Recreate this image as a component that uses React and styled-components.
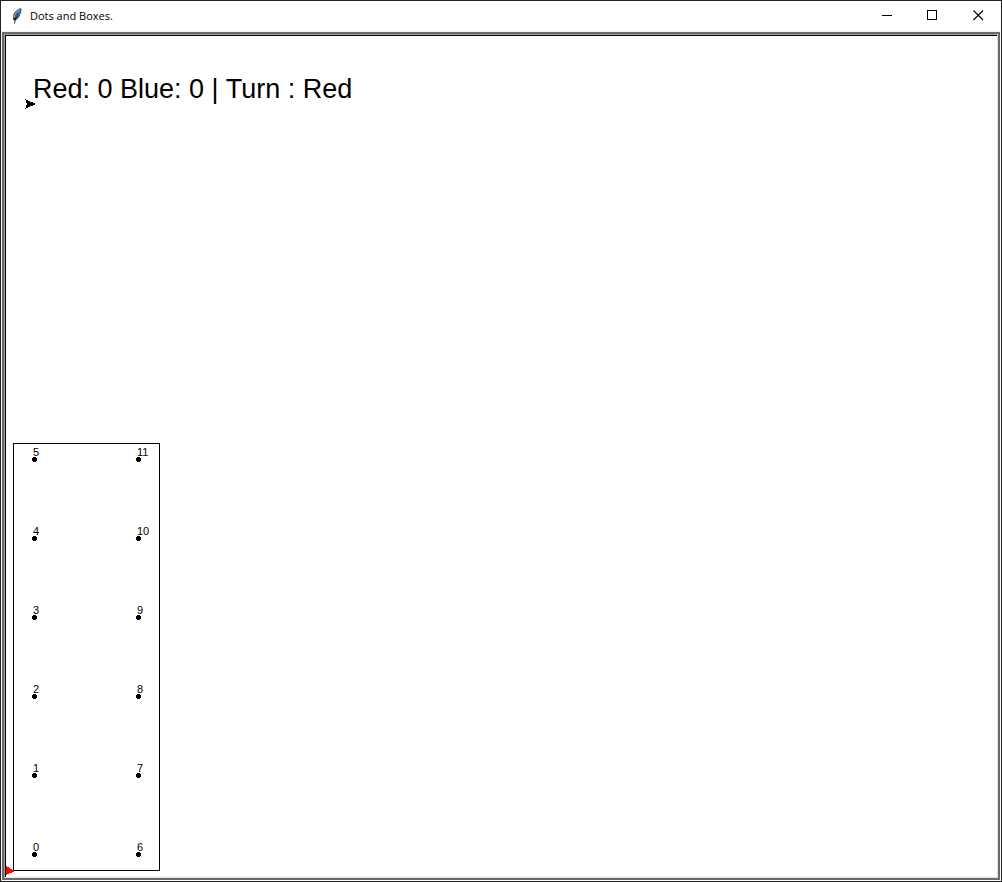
import React from "react";
import styled, { createGlobalStyle } from "styled-components";

const GlobalStyle = createGlobalStyle`
  *, *::before, *::after { box-sizing: border-box; }
  body { margin: 0; background: #fff; }
`;

const Window = styled.div`
  display: flex;
  flex-direction: column;
  min-height: 100vh;
  border: 1px solid #222024;
  background: #fff;
  color: #000;
`;

const TitleBar = styled.header`
  display: flex;
  align-items: center;
  height: 30px;
  padding-left: 10px;
`;

const Title = styled.h1`
  flex: 1;
  margin: 0 0 0 7px;
  font: 400 11px/16px "Open Sans", "Noto Sans", sans-serif;
`;

const CaptionButton = styled.button`
  display: flex;
  align-items: center;
  justify-content: center;
  width: 46px;
  height: 30px;
  padding: 0 0 2px;
  border: 0;
  background: transparent;
  color: #000;
`;

const Frame = styled.div`
  display: flex;
  flex: 1;
  border: 1px solid #fff;
  border-top-color: #f0f0f0;
  border-left-color: #f0f0f0;
`;

const Bezel = styled.div`
  display: flex;
  flex: 1;
  border: 2px solid #696969;
`;

const Groove = styled.div`
  display: flex;
  flex: 1;
  border: 1px solid #e3e3e3;
  border-top-color: #a0a0a0;
  border-left-color: #a0a0a0;
`;

const Canvas = styled.main`
  position: relative;
  display: flex;
  flex: 1;
  flex-direction: column;
  align-items: flex-start;
  justify-content: space-between;
  padding: 37px 7px 6px;
  border: solid #000;
  border-width: 1px 0 0 1px;
  font-family: "Liberation Sans", Arial, sans-serif;
`;

const Score = styled.p`
  margin: 0 0 0 20px;
  font-size: 27px;
  line-height: 32px;
`;

const Board = styled.ol`
  display: grid;
  grid-template-columns: 104px 23px;
  grid-template-rows: repeat(6, 15px);
  grid-auto-flow: column;
  row-gap: 64px;
  margin: 0;
  padding: 3px 0 13px 18px;
  border: 1px solid #000;
  list-style: none;
`;

const Point = styled.li`
  display: flex;
  flex-direction: column;
`;

const PointLabel = styled.span`
  padding-left: 1px;
  font-size: 11px;
  line-height: 10px;
`;

const Cursor = styled.svg`
  position: absolute;
  left: ${(p) => p.$left};
  top: ${(p) => p.$top};
  bottom: ${(p) => p.$bottom};
`;

const points = [5, 4, 3, 2, 1, 0, 11, 10, 9, 8, 7, 6];

const Feather = () => (
  <svg width="12" height="16" viewBox="0 0 12 16" aria-hidden="true">
    <path d="M10 0.2C6.5 0.8 3.4 3.8 2.3 7.3L2 11.4L4 12.8C7.8 10.5 10 6.5 10.5 1.5Z" fill="#22324a" />
    <path d="M9.4 1.2C6.5 3.5 4.6 6.5 4 11L5 10.6C8 8 9.4 4.8 9.7 1.6Z" fill="#4a90dc" />
    <path d="M8.6 1.4C5.8 3.2 3.8 6 3.2 9.6" fill="none" stroke="#9cc0e2" strokeWidth="1.1" />
    <path d="M7.4 4.8L4.2 11L3.5 15.5" fill="none" stroke="#111" strokeWidth="0.9" />
  </svg>
);

export default function App() {
  return (
    <>
      <GlobalStyle />
      <Window>
        <TitleBar>
          <Feather />
          <Title>Dots and Boxes.</Title>
          <CaptionButton type="button" aria-label="Minimize">
            <svg width="11" height="11" shapeRendering="crispEdges">
              <path d="M1 5.5H11" stroke="currentColor" />
            </svg>
          </CaptionButton>
          <CaptionButton type="button" aria-label="Maximize">
            <svg width="11" height="11" shapeRendering="crispEdges">
              <rect x="0.5" y="0.5" width="9" height="9" fill="none" stroke="currentColor" />
            </svg>
          </CaptionButton>
          <CaptionButton type="button" aria-label="Close">
            <svg width="11" height="11">
              <path d="M0.5 0.5L10 10M10 0.5L0.5 10" stroke="currentColor" strokeWidth="1.1" />
            </svg>
          </CaptionButton>
        </TitleBar>
        <Frame>
          <Bezel>
            <Groove>
              <Canvas>
                <Score>Red: 0 Blue: 0 | Turn : Red</Score>
                <Board>
                  {points.map((n) => (
                    <Point key={n}>
                      <PointLabel>{n}</PointLabel>
                      <svg width="5" height="5" aria-hidden="true" shapeRendering="crispEdges">
                        <path d="M1 0H4V1H5V4H4V5H1V4H0V1H1Z" />
                      </svg>
                    </Point>
                  ))}
                </Board>
                <Cursor $left="19px" $top="63px" width="11" height="10" aria-hidden="true" shapeRendering="crispEdges">
                  <path d="M0 0L11 5L0 10L2 5Z" />
                </Cursor>
                <Cursor $left="0" $bottom="2px" width="9" height="9" aria-hidden="true" shapeRendering="crispEdges">
                  <path d="M0 0L9 5L0 9Z" fill="#f00" />
                </Cursor>
              </Canvas>
            </Groove>
          </Bezel>
        </Frame>
      </Window>
    </>
  );
}
